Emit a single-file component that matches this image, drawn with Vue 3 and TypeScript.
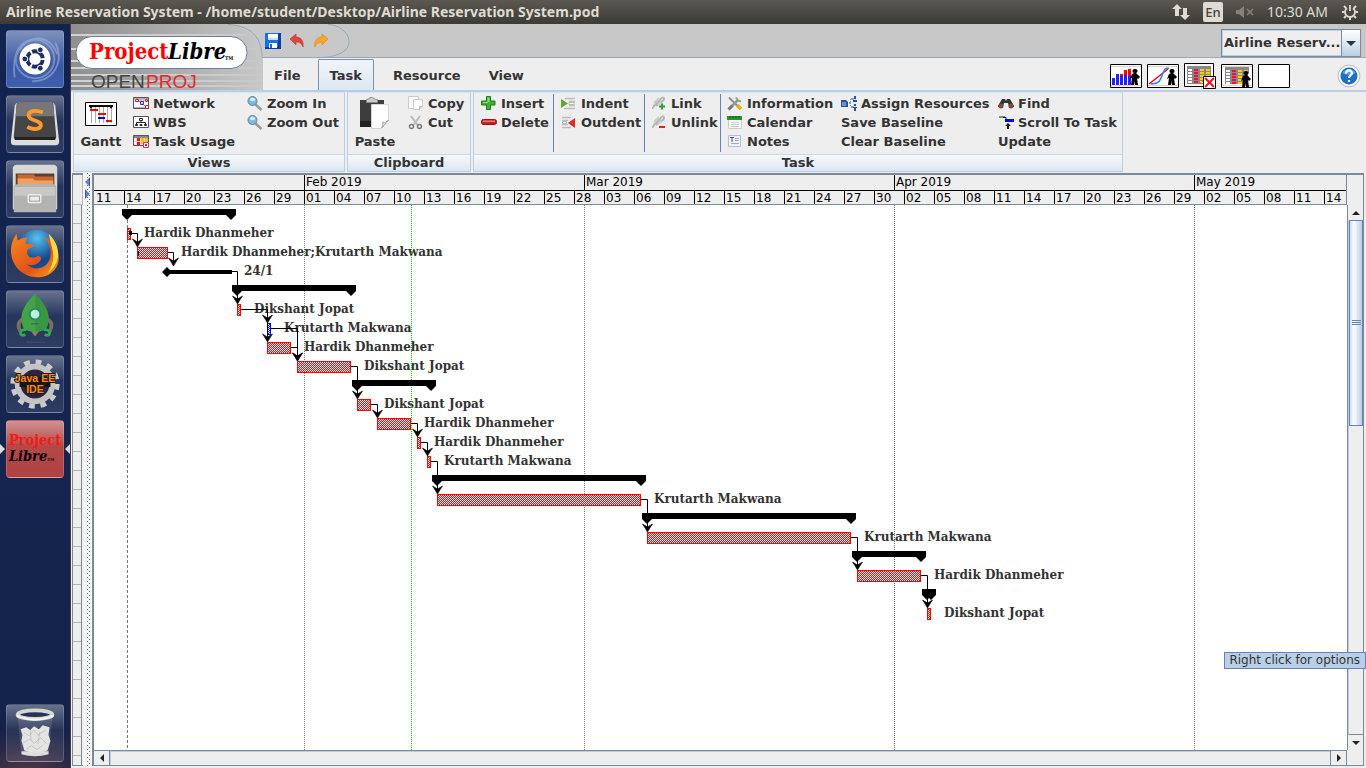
<script setup lang="ts">
import { ref } from 'vue'

interface Command { label: string; icon?: string }
interface Column { cls: string; items: Command[] }
interface Group { title: string; cls: string; big?: Command; columns: Column[] }
interface Task { row: number; start: number; end: number; kind: 'summary' | 'task' | 'blue'; label?: string }

const icons: Record<string, string> = {
  network: '<path fill="#fff" stroke="#555" d="M.5 1.500h15v11H.5z"/><path stroke="#c9a0a8" d="M1 2.500h14M1 11.500h14"/><path d="M4 4l5 3 4 4M4 4h9" stroke="#888"/><path fill="#fff" stroke="#d22" d="M2.500 3.500h3v2h-3zM12.500 3.500h2v2h-2zM12.500 9.500h3v3h-3z"/><path fill="#ccf" stroke="#33c" d="M7.500 5.500h3v3h-3z"/>',
  wbs: '<path fill="#fff" stroke="#555" d="M.5 1.500h15v11H.5z"/><path fill="none" stroke="#222" d="M8 5v3M3.500 10V7.500h9V10M6.500 3.500h3v2h-3zM2.500 9.500h2v1h-2zM7 9.500h2v1H7zM11.500 9.500h2v1h-2z"/>',
  usage: '<path fill="#ddd" stroke="#555" d="M.5 1.500h15v10H.5z"/><path fill="#888" d="M1 2h14v2H1z"/><path fill="#e12" d="M4 4h3v3H4zM4 8h3v3H4z"/><path fill="#fb1" d="M8 4h3v6H8zM12 4h3v4h-3z"/><path fill="#fff" d="M1 5h2v2H1zM1 8h2v2H1z"/><path fill="#fff" stroke="#b45" d="M10.500 8.500h5v5h-5z"/><path fill="#e12" d="M12 10h2v2h-2z"/>',
  zoom: '<path d="M8.500 8.500l6 5.500" stroke="#999" stroke-width="2.500"/><circle cx="5.500" cy="5" r="4.500" fill="#7db9dd" stroke="#5d87a4"/><ellipse cx="5.500" cy="3.500" rx="2.600" ry="1.800" fill="#d8f0fb"/>',
  copy: '<path fill="#fafafa" stroke="#ccc" d="M.5.5h10v12H.5z"/><path fill="#fff" stroke="#ccc" d="M5.500 3.500h9v7l-3 3h-6z"/><path d="M11.500 13.500v-3h3" fill="#ddd" stroke="#bbb"/>',
  cut: '<path d="M3 1l6.500 9M12 1L5.500 10" stroke="#bbb" stroke-width="2"/><circle cx="3.500" cy="11.500" r="2" fill="none" stroke="#777" stroke-width="1.400"/><circle cx="11.500" cy="11.500" r="2" fill="none" stroke="#777" stroke-width="1.400"/>',
  insert: '<path fill="#3fae34" stroke="#237d1e" d="M5.500.5h4v4.500h4.500v4H9.500v4.500h-4V9H.5V5h5z"/><path fill="#8cdc7c" d="M6.500 1.500h2V6h-2zM2 6h5v1H2z"/>',
  remove: '<rect x=".5" y="4.500" width="15" height="5" rx="2" fill="#cc1d24" stroke="#9a151a"/><path fill="#ef7a7a" d="M2 5.500h12v1.500H2z"/>',
  indent: '<path d="M4 2.500h10M8 5.500h6M8 9.500h6M3 12.500h11" stroke="#bbb" stroke-width="1.500"/><path fill="#fff" stroke="#bbb" d="M8 6.500h5v2H8z"/><path fill="#61a823" d="M0 3l7 4.500L0 12z"/>',
  outdent: '<path d="M1 2.500h9M1 5.500h6M1 9.500h6M1 12.500h9" stroke="#bbb" stroke-width="1.500"/><path fill="#fff" stroke="#bbb" d="M1.500 6.500h4v2h-4z"/><path fill="#df2b26" d="M14 3v10L7 8z"/>',
  link: '<path d="M1 12c2 0 1-2 3-3l5-5c1-3 4-3 4-1s-5 4-8 7" fill="none" stroke="#b5b5b5" stroke-width="2"/><path d="M3 7l5-5M7 9l3-3" stroke="#ccc" stroke-width="2"/><path d="M8 10.500h6M11 7.500v6" stroke="#3a9e38" stroke-width="2.200"/>',
  unlink: '<path d="M1 12c2 0 1-2 3-3l5-5c1-3 4-3 4-1s-5 4-8 7" fill="none" stroke="#b5b5b5" stroke-width="2"/><path d="M3 7l5-5M7 9l3-3" stroke="#ccc" stroke-width="2"/><path d="M8 12h6" stroke="#d22" stroke-width="2"/>',
  info: '<path d="M2 1.500l9 9" stroke="#888" stroke-width="1.800"/><path d="M10 9l4 4" stroke="#e2b41d" stroke-width="3.500"/><path d="M2 13l9-9" stroke="#999" stroke-width="2.600"/><path d="M1.500 13.500l4-4" stroke="#777" stroke-width="3"/><path d="M9 1.500l2 3 3 1" fill="none" stroke="#999" stroke-width="2"/>',
  calendar: '<path fill="#f8f8f8" stroke="#ccc" d="M1.500 2.500h13v11h-13z"/><path fill="#23962a" d="M0 1h15v4H0z"/><path d="M3 1v2M6 1v2M9 1v2M12 1v2" stroke="#075d0d"/><path d="M4 7.500h8M4 9.500h8M4 11.500h8" stroke="#ccc"/>',
  notes: '<path fill="#edf2fa" stroke="#a9c1e4" d="M1.500 1.500h12v11h-12z"/><path d="M3 3.500h4M5 3v5" stroke="#555"/><path d="M8 4.500h4M8 6.500h4M4 9.500h8" stroke="#aaa"/>',
  assign: '<path fill="#2454a8" d="M0 4h5l2 2v5H0z"/><path d="M1 7h4M1 9h4" stroke="#b9cdf0"/><path d="M8 7h2M10 3h3M10 11h3" stroke="#2454a8"/><path fill="#2454a8" d="M13 0h2v3h-2zM12 4h4v2h-4zM13 8h2v2h-2zM12 11h4v1h-4zM13 12h2v3h-2z"/><path d="M9.500 3v8" stroke="#7d9ad0" stroke-dasharray="1"/>',
  find: '<path fill="#333" d="M4 3h3l1 2 1-2h3l4 7v1h-5l-1-4H6l-1 4H0v-1z"/><circle cx="3" cy="10" r="2.500" fill="#7a4c3a"/><circle cx="13" cy="10" r="2.500" fill="#7a4c3a"/>',
  scroll: '<path fill="#888" d="M1 1h6v2H1z"/><path fill="#00f" d="M7 4h9v3H7z"/><path d="M5 2.500h3V5" fill="none" stroke="#222"/><path fill="#111" d="M7 11l3-3 3 3h-2v3H9v-3z"/>',
  gantt: '<path fill="#fff" stroke="#000" d="M.5.5h31v23H.5z"/><path d="M6.500 4v17M10.500 4v17M14.500 4v17M18.500 4v17M22.500 4v17M26.500 4v17" stroke="#aaa"/><path stroke="#000" stroke-width="2" d="M4 4h24"/><path fill="#000" d="M4 4h4l-2 3zM24 4h4l-2 3z"/><path stroke="red" stroke-width="2" d="M5 8h8M13 12h8M21 19h6"/><path stroke="#00f" stroke-width="2" d="M13 16h7"/>',
  paste: '<path fill="#3d3d3d" d="M1 3h24v27H1z"/><path fill="#222" d="M1 24h11v6H1z"/><path fill="#ccc" stroke="#888" d="M7.500 2.500c3 0 2-2 5-2s2 2 6 2v3h-11z"/><path fill="#fff" stroke="#d5d5d5" d="M12.500 7.500h17v16l-7 8h-10z"/><path fill="#ddd" stroke="#aaa" d="M22.500 31c2-3 1-6 1-6 2 1 5 0 6-2z"/>',
}

const groups: Group[] = [
  {
    title: 'Views', cls: 'g-views', big: { label: 'Gantt', icon: 'gantt' },
    columns: [
      { cls: 'w114', items: [{ label: 'Network', icon: 'network' }, { label: 'WBS', icon: 'wbs' }, { label: 'Task Usage', icon: 'usage' }] },
      { cls: 'w96', items: [{ label: 'Zoom In', icon: 'zoom' }, { label: 'Zoom Out', icon: 'zoom' }] },
    ],
  },
  {
    title: 'Clipboard', cls: 'g-clip', big: { label: 'Paste', icon: 'paste' },
    columns: [{ cls: 'w60', items: [{ label: 'Copy', icon: 'copy' }, { label: 'Cut', icon: 'cut' }] }],
  },
  {
    title: 'Task', cls: 'g-task',
    columns: [
      { cls: 'w80 ruled', items: [{ label: 'Insert', icon: 'insert' }, { label: 'Delete', icon: 'remove' }] },
      { cls: 'w91 ruled', items: [{ label: 'Indent', icon: 'indent' }, { label: 'Outdent', icon: 'outdent' }] },
      { cls: 'w76 ruled', items: [{ label: 'Link', icon: 'link' }, { label: 'Unlink', icon: 'unlink' }] },
      { cls: 'w120 lead', items: [{ label: 'Information', icon: 'info' }, { label: 'Calendar', icon: 'calendar' }, { label: 'Notes', icon: 'notes' }] },
      { cls: 'w157', items: [{ label: 'Assign Resources', icon: 'assign' }, { label: 'Save Baseline' }, { label: 'Clear Baseline' }] },
      { cls: 'w120', items: [{ label: 'Find', icon: 'find' }, { label: 'Scroll To Task', icon: 'scroll' }, { label: 'Update' }] },
    ],
  },
]

const tabs = ['File', 'Task', 'Resource', 'View']
const activeTab = ref('Task')
const project = ref('Airline Reserv...')

const months = [
  { name: '', days: 21 }, { name: 'Feb 2019', days: 28 }, { name: 'Mar 2019', days: 31 },
  { name: 'Apr 2019', days: 30 }, { name: 'May 2019', days: 31 },
]
const dayMs = 86400000
const dayTicks = Array.from({ length: 42 }, (_, i) => {
  const d = new Date(Date.UTC(2019, 0, 11) + i * 3 * dayMs)
  return String(d.getUTCDate()).padStart(2, '0')
})

const HD = 'Hardik Dhanmeher'
const KM = 'Krutarth Makwana'
const DJ = 'Dikshant Jopat'
const tasks: Task[] = [
  { row: 0, start: 28, end: 142, kind: 'summary' },
  { row: 1, start: 33, end: 37, kind: 'task', label: HD },
  { row: 2, start: 43, end: 74, kind: 'task', label: HD + ';' + KM },
  { row: 4, start: 138, end: 262, kind: 'summary' },
  { row: 5, start: 143, end: 147, kind: 'task', label: DJ },
  { row: 6, start: 173, end: 177, kind: 'blue', label: KM },
  { row: 7, start: 173, end: 197, kind: 'task', label: HD },
  { row: 8, start: 203, end: 257, kind: 'task', label: DJ },
  { row: 9, start: 258, end: 342, kind: 'summary' },
  { row: 10, start: 263, end: 277, kind: 'task', label: DJ },
  { row: 11, start: 283, end: 317, kind: 'task', label: HD },
  { row: 12, start: 323, end: 327, kind: 'task', label: HD },
  { row: 13, start: 333, end: 337, kind: 'task', label: KM },
  { row: 14, start: 338, end: 552, kind: 'summary' },
  { row: 15, start: 343, end: 547, kind: 'task', label: KM },
  { row: 16, start: 548, end: 762, kind: 'summary' },
  { row: 17, start: 553, end: 757, kind: 'task', label: KM },
  { row: 18, start: 758, end: 832, kind: 'summary' },
  { row: 19, start: 763, end: 827, kind: 'task', label: HD },
  { row: 20, start: 828, end: 842, kind: 'summary' },
  { row: 21, start: 833, end: 837, kind: 'task', label: DJ },
]
const summaries = tasks.filter(t => t.kind === 'summary')
const bars = tasks.filter(t => t.kind !== 'summary')
const rowY = (row: number) => 4 + row * 19

/* from row, x where the link leaves, x of the drop, target row */
const links: [number, number, number, number][] = [
  [1, 37, 43, 2], [2, 74, 79, 3], [3, 138, 143, 5], [5, 147, 173, 6], [5, 147, 173, 7],
  [6, 177, 203, 8], [7, 197, 203, 8], [8, 257, 263, 10], [10, 277, 283, 11], [11, 317, 323, 12],
  [12, 327, 333, 13], [13, 337, 343, 15], [15, 547, 553, 17], [17, 757, 763, 19], [19, 827, 833, 21],
]
const linkPath = (l: [number, number, number, number]) =>
  `M${l[1]} ${rowY(l[0]) + 5.5}H${l[2] + 0.5}V${rowY(l[3]) - 2}`
const arrowPath = (l: [number, number, number, number]) => {
  const x = l[2] + 0.5
  const y = rowY(l[3])
  return `M${x - 5} ${y - 8}L${x} ${y - 5}L${x + 5} ${y - 8}L${x + 3} ${y - 5}L${x} ${y}L${x - 3} ${y - 5}Z`
}
const capPath = (x: number, row: number) => `M${x} ${rowY(row) + 5}h10v1l-5 5l-5 -5z`
const monthLines = [210, 490, 800, 1100]
</script>

<template>
  <div class="desktop">
    <header class="panel">
      <span class="window-title">Airline Reservation System - /home/student/Desktop/Airline Reservation System.pod</span>
      <div class="indicators">
        <svg width="18" height="18" viewBox="0 0 18 18"><path fill="#dfdbd2" d="M5 1l5 5H7v7H3V6H0zM13 17l-5-5h3V5h4v7h3z" /></svg>
        <span class="lang">En</span>
        <svg width="18" height="14" viewBox="0 0 18 14"><path fill="#85827b" d="M0 5h3l5-4v12L3 9H0z" /><path d="M11 4l6 6M17 4l-6 6" stroke="#85827b" stroke-width="1.500" /></svg>
        <time>10:30 AM</time>
        <svg width="18" height="18" viewBox="0 0 18 18"><g fill="none" stroke="#dfdbd2"><path stroke-width="1.800" d="M6 5a5 5 0 1 0 6 0M9 2v6" /><path stroke-width="2" d="M3 3l2 2M15 3l-2 2M1 9h2.500M14.500 9h2.500M3 15l2-2M15 15l-2-2M9 14.500v2.500" /></g></svg>
      </div>
    </header>

    <div class="workspace">
      <nav class="launcher" aria-label="Launcher">
        <button class="tile dash" aria-label="Dash">
          <svg viewBox="0 0 58 58"><g fill="none" stroke="#a9bfe6" stroke-width="2" opacity=".5"><path d="M8 48C4 20 18 4 42 10M50 12c10 20-2 40-24 40M13 20c10-18 32-16 39 4" /><circle cx="29" cy="29" r="20" /></g><circle cx="29" cy="29" r="16" fill="#fff" /><circle cx="29" cy="29" r="8" fill="none" stroke="#1c2f62" stroke-width="4" stroke-dasharray="14.700 2" stroke-dashoffset="-1" /><g fill="#1c2f62" stroke="#fff"><circle cx="18.500" cy="29" r="3" /><circle cx="34.500" cy="19.500" r="3" /><circle cx="34.500" cy="38.500" r="3" /></g></svg>
        </button>
        <button class="tile" aria-label="Sublime Text">
          <svg viewBox="0 0 58 58"><path fill="#ddd" d="M8 10q1-3 4-3h34q3 0 4 3l4 37q0 4-4 4H8q-4 0-4-4z" /><path fill="#454545" d="M10 9q0-2 3-2h32q3 0 3 2l3 33q0 3-3 3H10q-3 0-3-3z" /><path fill="#777" d="M10 9q0-2 3-2h32q3 0 3 2l1 12H9z" /><path d="M8 44h42" stroke="#222" stroke-width="3" /><path d="M37 17c-11-4-18 1-13 6 4 3 12 3 11 8-1 4-9 4-14 1" fill="none" stroke="#ff9b2d" stroke-width="4" /></svg>
        </button>
        <button class="tile" aria-label="Files">
          <svg viewBox="0 0 58 58"><path fill="#d8d8d6" d="M6 7q1-3 4-3h38q3 0 4 3v43H6z" /><path fill="#5a4233" d="M9 13h40v12H9z" /><path fill="#c8672e" d="M11 14h17l1 2h19v4H11z" /><path fill="#eda35e" d="M11 18h16l1 2h20v6H11z" /><path fill="#b3b3b1" d="M7 27q0-3 3-3h38q3 0 3 3v26H7z" /><path fill="#c8c8c6" d="M8 27h42v9H8z" /><rect x="22" y="35" width="13" height="8" rx="1" fill="#aaa" stroke="#eee" stroke-width="1.500" /><path fill="#eee" d="M24 37h9v4h-9z" /></svg>
        </button>
        <button class="tile" aria-label="Firefox">
          <svg viewBox="0 0 58 58"><defs><linearGradient id="fox" x1="0" y1="0" x2="1" y2="1"><stop offset="0" stop-color="#f58a1f" /><stop offset=".6" stop-color="#e2511a" /><stop offset="1" stop-color="#f9a51a" /></linearGradient><radialGradient id="globe" cx=".5" cy=".2"><stop offset="0" stop-color="#57c1ee" /><stop offset="1" stop-color="#154a91" /></radialGradient></defs><circle cx="31" cy="26" r="22" fill="url(#globe)" /><path fill="url(#fox)" d="M10 8l1 7c3-2 7-3 10-3l-2 6c3 1 7 0 9 2-1 3-5 3-7 5-1 7 4 9 9 7 3-2 6 0 5 3-3 6-11 7-15 4 7 8 20 6 24-4 3-9 0-18-6-24 15 7 19 22 13 32-9 15-34 13-43-3C2 30 3 17 10 8z" /><path fill="#ffd83d" d="M43 8c14 13 13 31-1 41 6-9 7-17 5-25z" /></svg>
        </button>
        <button class="tile" aria-label="Rocket">
          <svg viewBox="0 0 58 58"><path d="M16 29q-7 5-2 13M42 29q7 5 2 13" fill="none" stroke="#777060" stroke-width="4" /><path d="M20 40q-7 0-6 4 1 3 5 1M38 40q7 0 6 4-1 3-5 1" fill="none" stroke="#31a951" stroke-width="3" /><path fill="#8a8065" d="M23 39h12l-6 8z" /><path fill="#43a348" d="M29 3C14 17 12 29 18 40q11 5 22 0C46 29 44 17 29 3z" /><path fill="#338a3b" d="M29 3c15 14 17 26 11 37q-5 2-11 2z" opacity=".5" /><circle cx="29" cy="24" r="5.500" fill="#b9f3d5" stroke="#2c8763" stroke-width="2" /><path d="M25 34h8M20 53h20" stroke="#456" /></svg>
        </button>
        <button class="tile" aria-label="Java EE IDE">
          <svg viewBox="0 0 58 58"><circle cx="29" cy="29" r="23" fill="none" stroke="#ccc" stroke-width="5" stroke-dasharray="6 6.040" /><circle cx="29" cy="29" r="18" fill="#2c2340" stroke="#c4c4c4" stroke-width="6" /><path fill="#15131c" d="M13 22h32v10H13z" /><g fill="#f08a24" stroke="#2b1708" stroke-width="2" paint-order="stroke" font-family="'Liberation Sans',sans-serif" font-weight="700" font-size="11" text-anchor="middle"><text x="29" y="27">Java EE</text><text x="29" y="38">IDE</text></g></svg>
        </button>
        <button class="tile current" aria-label="ProjectLibre">
          <svg viewBox="0 0 58 58"><g font-family="'DejaVu Serif Condensed','DejaVu Serif',serif" font-weight="700"><text x="2" y="25" font-size="15" fill="#f21b17">Project</text><text x="2" y="41" font-size="15" font-style="italic">Libre</text><text x="42" y="41" font-size="4">TM</text></g></svg>
        </button>
        <button class="tile trash" aria-label="Trash">
          <svg viewBox="0 0 58 58"><path fill="#fff" opacity=".12" d="M11 12h36l-4 40H15z" /><path fill="#ddd" d="M15 48h28v3q-14 4-28 0z" /><path fill="#e4e4e2" d="M14 25l6-2 4 3 4-4 5 3 4-4 7 2-1 8 2 6-3 10q-12 5-24 0l-3-10 1-6z" /><path d="M17 28l6 4 5-6 4 5 8-5M17 39l7-4 4 5 7-6 6 6M20 46l5-4 6 4 6-4M24 26l1 11M34 28l-2 12" stroke="#c4c4c4" fill="none" /><ellipse cx="29" cy="10" rx="18" ry="4.500" fill="#273357" stroke="#d6d6d0" stroke-width="4" /><path d="M10 11q19 8 38 0" fill="none" stroke="#f5f5ef" stroke-width="2" /></svg>
        </button>
      </nav>

      <main class="app">
        <div class="titlebar">
          <div class="brand">
            <svg width="278" height="72" viewBox="0 0 278 72" role="img" aria-label="ProjectLibre OpenProj">
              <defs>
                <linearGradient id="steel"><stop offset="0" stop-color="#8f8f8f" /><stop offset=".6" stop-color="#b0b0b0" /><stop offset="1" stop-color="#c8c8c8" /></linearGradient>
                <linearGradient id="fade"><stop offset="0" stop-color="#d2d2d2" /><stop offset="1" stop-color="#c8c8c8" /></linearGradient>
              </defs>
              <path fill="url(#steel)" d="M0 0h158c20 4 30 16 34 34v32H0z" />
              <path fill="url(#fade)" d="M0 10h176v2H0zM0 24h187v2H0zM0 36h192v2H0zM0 43h192v2H0zM0 50h192v2H0zM0 56h192v2H0zM0 61h192v2H0z" />
              <path d="M157 .5c22 1 34 12 34 33h57c16 0 30-5 30-16S265 .5 257 .5" fill="none" stroke="#9aa8b5" />
              <rect x="5" y="12.500" width="171" height="32" rx="16" fill="#fff" stroke="#6a7f98" />
              <g font-family="'DejaVu Serif Condensed','DejaVu Serif',serif" font-weight="700" font-size="22">
                <text x="18" y="35" fill="#f00">Project</text>
                <text x="97" y="35" font-style="italic">Libre</text>
                <text x="154" y="36" font-size="5">TM</text>
              </g>
              <g font-family="'Liberation Sans',sans-serif" font-size="19" font-weight="400"><text x="20" y="64" fill="#444">OPEN</text><text x="75" y="64" fill="#e8272d">PROJ</text></g>
            </svg>
          </div>
          <div class="quick">
            <button aria-label="Save"><svg width="16" height="16" viewBox="0 0 16 16"><path fill="#1670e8" d="M0 0h16v16H0z" /><path fill="#0a3eae" d="M13 0h3v16H0v-2h13z" /><path fill="#fff" d="M3 1h10v6H3zM4 10h8v5H4z" /><path fill="#bfe0ff" d="M3 5h10v2H3z" /><path fill="#1b66c8" d="M5 11h2v4H5z" /></svg></button>
            <button aria-label="Undo"><svg width="16" height="16" viewBox="0 0 16 16"><path fill="#e2433a" stroke="#b73530" stroke-width=".6" d="M1 6l6-5v3c5 0 8 4 7 10-1-3-3-5-7-5v3z" /></svg></button>
            <button aria-label="Redo"><svg width="16" height="16" viewBox="0 0 16 16"><path fill="#f7a72b" stroke="#d98316" stroke-width=".6" d="M15 6L9 1v3C4 4 1 8 2 14c1-3 3-5 7-5v3z" /></svg></button>
          </div>
          <div class="combo">
            <select v-model="project" aria-label="Project"><option>Airline Reserv...</option></select>
            <span class="combo-arrow"><svg width="10" height="5" viewBox="0 0 10 5"><path fill="#333" d="M0 0h10L5 5z" /></svg></span>
          </div>
        </div>

        <div class="tabrow">
          <div class="tabs">
            <button v-for="t in tabs" :key="t" class="tab" :class="{ active: t === activeTab }" @click="activeTab = t">{{ t }}</button>
          </div>
          <div class="views">
            <button aria-label="Histogram"><svg width="32" height="24" viewBox="0 0 32 24"><path fill="#fff" stroke="#000" d="M.5.5h31v23H.5z" /><path stroke="#f0d0c0" d="M1 2.500h30M1 21.500h30" /><path stroke="#22f" stroke-width="3" d="M3.500 21v-7M7.500 21V10M11.500 21v-9M15.500 21V9M19.500 21v-9" /><path stroke="red" stroke-width="3" d="M11.500 12v-2M15.500 11V6M19.500 12V5" /><path d="M25 5a2 2 0 0 1 1 4l4 4-2 2-1-1 1 7h-3v-4l-1 4h-3l1-7-2 1 2-5 2-1a2 2 0 0 1 1-4z" /></svg></button>
            <button aria-label="Charts"><svg width="32" height="24" viewBox="0 0 32 24"><path fill="#fff" stroke="#000" d="M.5.5h31v23H.5z" /><path stroke="#f0d0c0" d="M1 2.500h30M1 21.500h30" /><path fill="none" stroke="red" d="M2 20L21 5" stroke-width="1.500" /><path fill="none" stroke="#28f" d="M4 20c10-1 9-4 12-11s3-4 6-5" stroke-width="1.500" /><path d="M25 5a2 2 0 0 1 1 4l4 4-2 2-1-1 1 7h-3v-4l-1 4h-3l1-7-2 1 2-5 2-1a2 2 0 0 1 1-4z" /></svg></button>
            <button aria-label="Hide usage"><svg width="32" height="26" viewBox="0 0 32 26"><path fill="#fff" stroke="#000" d="M.5.5h29v23H.5z" /><path fill="#888" d="M3 3h24v18H3z" /><path stroke="#fff" stroke-width="4" stroke-dasharray="2 1" d="M6 6v15" /><path stroke="#e13" stroke-width="4" stroke-dasharray="2 1" d="M12 6v15" /><path stroke="#fc1" stroke-width="4" stroke-dasharray="2 1" d="M18 6v15M24 6v8" /><path fill="#fff" stroke="#000" d="M19.500 13.500h12v12h-12z" /><path stroke="#e12" stroke-width="2" d="M21 15l9 9M30 15l-9 9" /></svg></button>
            <button aria-label="Task usage"><svg width="32" height="24" viewBox="0 0 32 24"><path fill="#fff" stroke="#000" d="M.5.5h31v23H.5z" /><path stroke="#f0d0c0" d="M1 2.500h30M1 21.500h30" /><path fill="#888" d="M4 3h24v17H4z" /><path stroke="#fff" stroke-width="4" stroke-dasharray="2 1" d="M7 6v14" /><path stroke="#e13" stroke-width="4" stroke-dasharray="2 1" d="M13 6v14" /><path stroke="#fc1" stroke-width="4" stroke-dasharray="2 1" d="M19 6v14M25 6v8" /><path fill="#fff" d="M27 9h4v12h-4z" /><path d="M25 7a2 2 0 0 1 1 4l4 4-2 2-1-1 1 7h-3v-4l-1 4h-3l1-7-2 1 2-5 2-1a2 2 0 0 1 1-4z" /></svg></button>
            <button aria-label="No sub-view"><svg width="32" height="24" viewBox="0 0 32 24"><path fill="#fff" stroke="#000" d="M.5.5h31v23H.5z" /></svg></button>
            <button class="help" aria-label="Help"><svg width="24" height="24" viewBox="0 0 24 24"><circle cx="12" cy="12" r="11" fill="#f4f4f4" stroke="#bbb" /><circle cx="12" cy="12" r="8.500" fill="#1a70c8" /><path d="M5 9q7-8 14 0-7 4-14 0" fill="#6fb2ee" opacity=".7" /><path d="M9 9.500c0-4 6-4 6-.5 0 2-3 2.500-3 5M12 16v2" fill="none" stroke="#fff" stroke-width="2.200" /></svg></button>
          </div>
        </div>

        <div class="ribbon">
          <section v-for="g in groups" :key="g.title" class="group" :class="g.cls">
            <div class="group-body">
              <button v-if="g.big" class="big">
                <svg width="32" height="32" :viewBox="g.big.icon === 'gantt' ? '0 -5 32 32' : '0 0 32 32'" v-html="icons[g.big.icon!]"></svg>
                <span>{{ g.big.label }}</span>
              </button>
              <div v-for="(c, i) in g.columns" :key="i" class="column" :class="c.cls">
                <button v-for="it in c.items" :key="it.label" class="command">
                  <svg v-if="it.icon" width="16" height="15" viewBox="0 0 16 15" v-html="icons[it.icon]"></svg>
                  <span>{{ it.label }}</span>
                </button>
              </div>
            </div>
            <h2>{{ g.title }}</h2>
          </section>
        </div>

        <div class="split">
          <div class="sheet"><div class="sheet-head"></div><div class="sheet-rows"></div></div>
          <div class="divider">
            <button aria-label="Collapse left"><svg width="5" height="10" viewBox="0 0 5 10"><path fill="#6382bf" d="M0 5l5-5v10z" /><path d="M4.500 1v8" stroke="#3c5a96" /></svg></button>
            <button aria-label="Collapse right"><svg width="5" height="10" viewBox="0 0 5 10"><path fill="#6382bf" d="M5 5L0 0v10z" /><path d="M.5 1v8" stroke="#3c5a96" /></svg></button>
          </div>
          <div class="gantt">
            <div class="timeline">
              <div class="months">
                <span v-for="(m, i) in months" :key="i" :style="{ width: m.days * 10 + 'px' }">{{ m.name }}</span>
              </div>
              <div class="days"><span v-for="(d, i) in dayTicks" :key="i">{{ d }}</span></div>
            </div>
            <div class="corner"></div>

            <svg class="chart" role="img" aria-label="Gantt chart">
              <defs>
                <pattern id="redmesh" width="2" height="2" patternUnits="userSpaceOnUse"><path fill="#fff" d="M0 0h2v2H0z" /><path fill="#f00" d="M0 0h1v1H0zM1 1h1v1H1z" /></pattern>
                <pattern id="bluemesh" width="2" height="2" patternUnits="userSpaceOnUse"><path fill="#fff" d="M0 0h2v2H0z" /><path fill="#00f" d="M0 0h1v1H0zM1 1h1v1H1z" /></pattern>
              </defs>
              <line x1="33.500" x2="33.500" y1="0" y2="100%" stroke="#777" stroke-dasharray="3 2" />
              <line v-for="x in monthLines" :key="x" :x1="x + 0.5" :x2="x + 0.5" y1="0" y2="100%" stroke="#777" stroke-dasharray="1 1" />
              <g v-for="b in bars" :key="b.row">
                <rect :x="b.start + 0.5" :y="rowY(b.row) + 0.5" :width="b.end - b.start - 1" height="11" :fill="b.kind === 'blue' ? 'url(#bluemesh)' : 'url(#redmesh)'" :stroke="b.kind === 'blue' ? '#00f' : '#f00'" />
                <text :x="b.end + 13" :y="rowY(b.row) + 9">{{ b.label }}</text>
              </g>
              <line x1="317.500" x2="317.500" y1="0" y2="100%" stroke="#0c0" stroke-dasharray="1 1" />
              <path d="M35 26h3v4h-3zM44 46h1v5h-1z" />
              <path d="M68 67l5-5 5 5-5 5zM73 65h65v4H73z" />
              <text x="150" y="70">24/1</text>
              <g v-for="s in summaries" :key="s.row">
                <rect :x="s.start" :y="rowY(s.row)" :width="s.end - s.start" height="6" />
                <path :d="capPath(s.start, s.row)" /><path :d="capPath(s.end - 10, s.row)" />
              </g>
              <g v-for="(l, i) in links" :key="i">
                <path :d="linkPath(l)" fill="none" stroke="#000" />
                <path :d="arrowPath(l)" stroke="#000" stroke-width=".6" />
              </g>
            </svg>
            <div class="vbar">
              <button aria-label="Scroll up"><svg width="8" height="4" viewBox="0 0 8 4"><path fill="#222" d="M0 4l4-4 4 4z" /></svg></button>
              <div class="vtrack"><div class="vthumb"><i></i><i></i><i></i></div></div>
              <button aria-label="Scroll down"><svg width="8" height="4" viewBox="0 0 8 4"><path fill="#222" d="M0 0h8L4 4z" /></svg></button>
            </div>
            <div class="hbar">
              <button aria-label="Scroll left"><svg width="4" height="8" viewBox="0 0 4 8"><path fill="#222" d="M4 0v8L0 4z" /></svg></button>
              <div class="htrack"></div>
              <button aria-label="Scroll right"><svg width="4" height="8" viewBox="0 0 4 8"><path fill="#222" d="M0 0v8l4-4z" /></svg></button>
            </div>
            <div class="corner"></div>
          </div>
          <div class="tooltip" role="tooltip">Right click for options</div>
        </div>
      </main>
    </div>
  </div>
</template>

<style>
body { margin: 0; overflow: hidden; }
</style>

<style scoped>
* { box-sizing: border-box; }
button { border: 0; padding: 0; margin: 0; background: none; font: inherit; color: inherit; }
svg { display: block; flex: none; }
.desktop { height: 100vh; display: flex; flex-direction: column; overflow: hidden; font: bold 13px/19px "DejaVu Sans", sans-serif; color: #333; }
.panel { flex: none; height: 24px; display: flex; align-items: center; justify-content: space-between; padding: 0 7px 0 6px; background: linear-gradient(#5a5850, #3d3b36); color: #dfdbd2; font: bold 14px/24px "Noto Sans", sans-serif; white-space: nowrap; }
.indicators { display: flex; align-items: center; gap: 13px; font-weight: 400; }
.lang { width: 20px; height: 20px; border-radius: 2px; background: #dfdbd2; color: #45433e; font-size: 13px; font-weight: 500; line-height: 20px; text-align: center; }
.workspace { flex: 1; min-height: 0; display: flex; }

.launcher { flex: none; width: 71px; display: flex; flex-direction: column; gap: 7px; padding: 6px 0 6px 6px; border-right: 1px solid #4b3a3c; background: radial-gradient(ellipse 90px 40px at 40% 100%, #4a3645 0, #2a2848 50%, transparent 100%), linear-gradient(#132350 0, #14254f 55%, #14224a 100%); }
.tile { position: relative; width: 58px; height: 58px; border-radius: 4px; border: 1px solid rgba(255, 255, 255, .16); background: linear-gradient(rgba(255, 255, 255, .36), rgba(255, 255, 255, .08) 45%, rgba(255, 255, 255, .11)); }
.tile svg { width: 56px; height: 56px; }
.dash { background: linear-gradient(#7f92bb, #3a58a4 60%, #3d5fae); }
.current { background: linear-gradient(#cf9392, #b54747 45%, #ae4343); }
.current::before, .current::after { content: ""; position: absolute; top: 23px; border: 5px solid transparent; }
.current::before { left: -7px; border-left-color: #ddd; border-right: 0; }
.current::after { right: -7px; border-right-color: #ddd; border-left: 0; }
.trash { margin-top: auto; }

.app { flex: 1; min-width: 0; display: flex; flex-direction: column; background: #eee; }
.titlebar { flex: none; height: 34px; display: flex; background: #c8c8c8; border-bottom: 1px solid #9aa8b5; }
.brand { width: 192px; position: relative; z-index: 1; }
.brand svg { pointer-events: none; overflow: visible; }
.quick { flex: 1; display: flex; gap: 8px; padding: 9px 0 0 2px; align-items: flex-start; position: relative; z-index: 2; }
.combo { display: flex; position: relative; width: 140px; height: 28px; margin: 5px 5px 0 0; border: 1px solid #7a8a99; background: #eee; box-shadow: inset 0 0 0 1px #b8cfe5; }
.combo select { flex: 1; min-width: 0; appearance: none; border: 0; background: transparent; padding: 0 0 2px 2px; font: inherit; color: inherit; }
.combo-arrow { width: 19px; display: grid; place-items: center; border-left: 1px solid #7a8a99; background: linear-gradient(#fff, #dfe9f3 50%, #b8cfe5); pointer-events: none; }
.tabrow { flex: none; height: 34px; display: flex; justify-content: space-between; border-bottom: 2px solid #b8cfe5; background: #eee; }
.tabs { display: flex; padding: 1px 0 0 191px; }
.tab { padding: 0 13px; border: 1px solid transparent; border-bottom: 0; }
.tab:first-child { padding: 0 16px 0 11px; }
.tab.active { padding: 0 11px; margin-right: 5px; border-color: #7a93ad; border-radius: 2px 2px 0 0; background: linear-gradient(#eff4f9, #dde8f3); }
.views { display: flex; align-items: center; gap: 5px; padding: 3px 5px 0 0; }
.help { margin-left: 42px; }

.ribbon { flex: none; height: 81px; display: flex; gap: 2px; padding: 0 0 0 2px; }
.group { height: 80px; display: flex; flex-direction: column; border: 1px solid #b8cfe5; border-top-color: #d7e5f2; }
.g-views { width: 272px; }
.g-clip { width: 124px; }
.g-task { width: 650px; }
.group-body { flex: 1; display: flex; padding: 1px 0 0 0; }
.group h2 { flex: none; height: 17px; margin: 0; border-top: 1px solid #c6d8ea; background: linear-gradient(#f6f9fb, #dce6f0); font: inherit; line-height: 15px; text-align: center; }
.big { width: 54px; display: flex; flex-direction: column; align-items: center; padding-top: 3px; }
.big span { margin-top: 3px; }
.g-views .big { margin-right: 5px; }
.g-clip .big { margin-right: 6px; }
.column { display: flex; flex-direction: column; white-space: nowrap; }
.command { display: flex; align-items: center; gap: 4px; height: 19px; text-align: left; }
.w60 { width: 60px; }
.w76 { width: 76px; padding-left: 6px; }
.w80 { width: 80px; padding-left: 7px; }
.w91 { width: 91px; padding-left: 7px; }
.w96 { width: 96px; }
.w114 { width: 114px; }
.w120 { width: 120px; }
.w157 { width: 157px; }
.lead { padding-left: 6px; }
.ruled { height: 58px; border-right: 1px solid #6382bf; }

.split { flex: 1; min-height: 0; display: flex; position: relative; padding: 0 2px 2px 1px; }
.sheet { width: 11px; display: flex; flex-direction: column; border: 1px solid #7a8a99; border-width: 2px 0 1px 1px; }
.sheet-head { height: 30px; border: 1px solid #b8b8b8; border-width: 0 1px 1px 0; }
.sheet-rows { flex: 1; margin-right: 1px; border-right: 1px solid #7a8a99; background: repeating-linear-gradient(#eee 0 18px, #b4b4b4 18px 19px); }
.divider { width: 9px; display: flex; flex-direction: column; gap: 2px; padding: 4px 0 0 2px; background: conic-gradient(at 1px 1px, transparent 75%, #777 0) 4px 0 / 4px 4px repeat-y, conic-gradient(at 1px 1px, transparent 75%, #777 0) 6px 2px / 4px 4px repeat-y, #f5f5f5; }
.gantt { flex: 1; min-width: 0; display: grid; grid-template: 30px minmax(0, 1fr) 15px / minmax(0, 1fr) 16px; border: 1px solid #7a8a99; border-width: 2px 1px 1px 2px; background: #fff; }
.timeline { overflow: hidden; border-right: 1px solid #7a8a99; border-bottom: 1px solid #7a8a99; background: #eee; color: #000; font-size: 12px; font-weight: 400; }
.months, .days { display: flex; white-space: nowrap; }
.months { height: 16px; border-bottom: 1px solid #000; line-height: 15px; }
.days { height: 14px; line-height: 14px; }
.months span, .days span { flex: none; padding-left: 1px; border-left: 1px solid #000; }
.days span { width: 30px; }
.months span:first-child, .days span:first-child { border-left-color: transparent; }
.corner { background: #eee; }
.chart { width: 100%; height: 100%; overflow: hidden; }
.chart text { font: bold 12px "DejaVu Serif", serif; fill: #333; }
.vbar { display: flex; flex-direction: column; border-left: 1px solid #7a8a99; background: #eee; }
.vbar button, .hbar button { flex: none; display: grid; place-items: center; width: 15px; }
.vbar button { height: 15px; }
.vtrack { flex: 1; border-left: 1px solid #b8cfe5; border-bottom: 1px solid #7a8a99; }
.vthumb { height: 40%; display: flex; flex-direction: column; align-items: center; justify-content: center; gap: 1px; border: 1px solid #6382bf; background: linear-gradient(90deg, #c8dcee, #fff 30%, #b8cfe5); }
.vthumb i { width: 9px; height: 1px; background: #6382bf; }
.hbar { display: flex; border-top: 1px solid #7a8a99; border-right: 1px solid #7a8a99; background: #eee; }
.htrack { flex: 1; border: 1px solid #7a8a99; border-width: 0 1px; box-shadow: inset 1px 1px #b8cfe5; }
.tooltip { position: absolute; right: 0; bottom: 99px; height: 17px; padding: 0 5px 0 4px; border: 1px solid #6382bf; background: #b8cfe5; font-size: 12px; font-weight: 400; line-height: 15px; white-space: nowrap; }
</style>
